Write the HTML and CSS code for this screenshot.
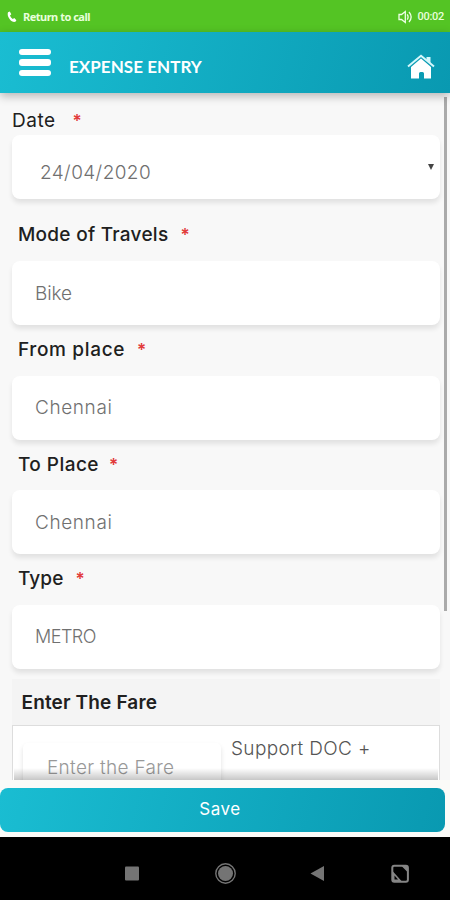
FILE: index.html
```html
<!DOCTYPE html>
<html lang="en">
<head>
<meta charset="utf-8">
<title>Expense Entry</title>
<link rel="stylesheet" href="styles.css">
</head>
<body>
<div class="status">
  <svg class="phone" viewBox="0 0 10 12"><path d="M1 1.2 2.8.4 4.3 3.2 3 4.5C3.5 6 4.5 7.2 5.8 8L7.3 7 9.4 9.2 8.4 10.8C4.2 12-.6 5.5 1 1.2Z" fill="#fff"/></svg>
  <span class="call">Return to call</span>
  <svg class="speaker" viewBox="0 0 15 14" fill="none" stroke="#efffe8" stroke-width="1.3"><path d="M1 4.5H3.5L7.3 1.5V12.5L3.5 9.5H1ZM9.2 4.3Q11 7 9.2 9.7M11 2Q15.300 7 11 12"/></svg>
  <span class="timer">00:02</span>
</div>
<header class="header">
  <div class="menu"><i></i><i></i><i></i></div>
  <h1 class="title">EXPENSE ENTRY</h1>
  <svg class="home" viewBox="0 0 28 26"><path d="M4 13 14 4.500 24 13V24.500H17V19.500Q17 18 15.500 18H13.500Q12 18 12 19.500V24.500H4Z" fill="#fff"/><path d="M1 12.500 14 1.700 27 12.500" fill="none" stroke="#d5f7fb" stroke-width="2"/><path d="M19.500 3H23.500V9.500L19.500 6.200Z" fill="#d5f7fb"/></svg>
</header>
<main class="content">
  <div class="label date"><span class="w-date">Date</span><b class="star">*</b></div>
  <div class="field date-field"><span class="w-num">24/04/2020</span><i class="arrow"></i></div>
  <div class="label mode"><span class="w-mode">Mode of Travels</span><b class="star">*</b></div>
  <div class="field"><span class="w-bike">Bike</span></div>
  <div class="label"><span class="w-from">From place</span><b class="star">*</b></div>
  <div class="field"><span class="w-chennai">Chennai</span></div>
  <div class="label"><span class="w-to">To Place</span><b class="star">*</b></div>
  <div class="field"><span class="w-chennai">Chennai</span></div>
  <div class="label"><span class="w-type">Type</span><b class="star">*</b></div>
  <div class="field"><span class="w-metro">METRO</span></div>
  <section class="fare">
    <div class="fare-title"><span class="w-faretitle">Enter The Fare</span></div>
    <div class="fare-box">
      <div class="fare-input"><span class="w-fare">Enter the Fare</span></div>
      <div class="doc"><span class="w-doc">Support DOC +</span></div>
    </div>
  </section>
  <div class="fade"></div>
  <div class="scroll"></div>
</main>
<footer class="footer"><button class="save"><span>Save</span></button></footer>
<nav class="nav">
  <svg viewBox="0 0 450 62" fill="#747474">
    <rect x="125" y="29.500" width="14" height="14" rx="1"/>
    <circle cx="225.500" cy="36.500" r="7.500"/><circle cx="225.500" cy="36.500" r="9.700" fill="none" stroke="#747474" stroke-width="1.400"/>
    <path d="M310.500 36.500 324 29V44Z"/>
    <rect x="392.300" y="28.800" width="15.600" height="16" rx="2" fill="none" stroke="#858585" stroke-width="2"/>
    <path d="M393 34.500 401.500 44H393ZM401.500 29H407.500V35Z" fill="#858585"/>
    <path d="M394.500 38.500V42.500H398Z" fill="#000"/>
  </svg>
</nav>
</body>
</html>
```
FILE: styles.css
```css
* { box-sizing: border-box; }
body {
  margin: 0;
  width: 450px;
  height: 900px;
  overflow: hidden;
  display: flex;
  flex-direction: column;
  background: #f8f8f8;
  font-family: Inter, "Liberation Sans", sans-serif;
  font-size: 19px;
  color: #202020;
}
span, h1 { white-space: nowrap; }
.status {
  height: 32px;
  flex: none;
  display: flex;
  align-items: center;
  padding: 1px 6px 0 7px;
  background: #54c424;
  color: #e8ffdc;
}
.phone { width: 10px; height: 12px; }
.call { margin-left: 6px; font: bold 11px/14px "Noto Sans", sans-serif; letter-spacing: -0.5px; }
.speaker { width: 15px; height: 14px; margin-left: auto; }
.timer { margin-left: 5px; font: 500 11px/14px Roboto, sans-serif; letter-spacing: -0.3px; }
.header {
  position: relative;
  z-index: 2;
  height: 61px;
  flex: none;
  display: flex;
  align-items: center;
  padding: 0 15px 0 19px;
  background: linear-gradient(105deg, #1abdd2, #0999b1);
  box-shadow: 0 3px 9px rgba(0, 0, 0, .28);
}
.menu { display: flex; flex-direction: column; gap: 4px; width: 32px; }
.menu i { height: 6.500px; border-radius: 3px; background: #fff; }
.title { margin: 8px 0 0 18px; color: #fff; font: bold 17px/24px Lato, sans-serif; letter-spacing: .05px; }
.home { width: 28px; height: 26px; margin: 8px 0 0 auto; }
.content {
  position: relative;
  flex: none;
  height: 687px;
  overflow: hidden;
  padding: 0 10px 0 12px;
}
.label { height: 50.500px; display: flex; align-items: center; padding: 0 0 0 6px; font-weight: 500; line-height: 24px; }
.label.date { height: 42px; padding: 13px 0 0; font-weight: 400; }
.label.mode { height: 62px; padding-top: 10px; }
.star { margin-left: 12px; color: #e23b3b; font-size: 17px; font-weight: 600; line-height: 24px; }
.date .star { margin-left: 17px; }
.w-to + .star { margin-left: 10px; }
.w-date { letter-spacing: .5px; }
.w-num { letter-spacing: .4px; }
.w-mode { letter-spacing: .27px; }
.w-bike { letter-spacing: -.1px; }
.w-from { letter-spacing: .65px; }
.w-chennai { letter-spacing: .6px; }
.w-to { letter-spacing: .45px; }
.w-type { letter-spacing: .1px; }
.w-metro { font-size: 18px; letter-spacing: -.5px; }
.w-faretitle { letter-spacing: .15px; }
.w-fare { letter-spacing: .3px; }
.w-doc { letter-spacing: .35px; }
.field {
  height: 64px;
  display: flex;
  align-items: center;
  padding-left: 23px;
  border-radius: 8px;
  background: #fff;
  box-shadow: 0 4px 5px rgba(0, 0, 0, .09);
  color: #707070;
  font-weight: 300;
}
.date-field { padding: 11px 5px 0 28px; }
.arrow { margin: -11px 1px 0 auto; border: 3.500px solid transparent; border-top: 6px solid #444; border-bottom: 0; }
.fare { margin-top: 10px; background: #f4f4f4; }
.fare-title { height: 46px; padding: 12px 0 0 9.500px; font-weight: 600; line-height: 24px; }
.fare-box { height: 100px; display: flex; padding: 17px 0 0 10px; border: 1px solid #ddd; background: #fff; }
.fare-input { width: 198px; padding: 13px 0 0 24px; border-radius: 5px; box-shadow: 0 3px 5px rgba(0, 0, 0, .12); font-weight: 300; line-height: 24px; color: #999; }
.doc { margin: -6px 0 0 10px; font-weight: 300; line-height: 24px; color: #555; }
.fade { position: absolute; left: 14px; right: 12px; bottom: 0; height: 12px; background: linear-gradient(transparent, rgba(0, 0, 0, .22)); }
.scroll { position: absolute; left: 444px; top: 4px; width: 3px; height: 514px; background: #aaa; }
.footer { height: 57px; flex: none; padding: 8px 5px 5px 0; background: #fbfbf8; }
.save {
  display: flex;
  align-items: center;
  justify-content: center;
  width: 445px;
  height: 44px;
  padding: 0 5px 2px 0;
  border: 0;
  border-radius: 8px;
  background: linear-gradient(105deg, #1abdd2, #0999b1);
  color: #fff;
  font: 400 17px/24px Inter, sans-serif;
  letter-spacing: .6px;
}
.nav { height: 63px; flex: none; background: #000; }
.nav svg { display: block; width: 450px; height: 62px; }
```
